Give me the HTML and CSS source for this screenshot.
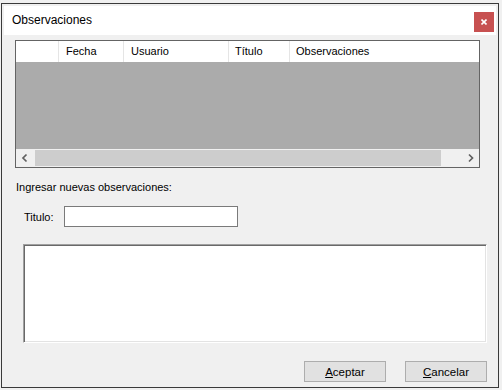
FILE: index.html
```html
<!DOCTYPE html>
<html>
<head>
    <meta charset="UTF-8">
    <meta name="viewport" content="width=device-width, initial-scale=1.0">
    <title>Observaciones</title>
    <link rel="stylesheet" href="styles.css">
</head>
<body>
    <div class="dialog">
        <div class="title-bar">
            <span class="title">Observaciones</span>
            <button class="close-btn" aria-label="Cerrar">
                <svg width="6" height="6" viewBox="0 0 6 6">
                    <path d="M0.5 0.5 L5.5 5.5 M5.5 0.5 L0.5 5.5" stroke="#fff" stroke-width="1.6" fill="none"/>
                </svg>
            </button>
        </div>

        <div class="dialog-body">
            <div class="grid">
                <div class="grid-header">
                    <div class="col col-row"></div>
                    <div class="col col-fecha">Fecha</div>
                    <div class="col col-usuario">Usuario</div>
                    <div class="col col-titulo">Título</div>
                    <div class="col col-obs">Observaciones</div>
                </div>
                <div class="grid-rows"></div>
                <div class="hscroll">
                    <div class="scroll-btn scroll-left">
                        <svg width="18" height="18" viewBox="0 0 18 18">
                            <polyline points="10.5,5.5 7,9 10.5,12.5" stroke="#606060" stroke-width="1.7" fill="none"/>
                        </svg>
                    </div>
                    <div class="scroll-track">
                        <div class="scroll-thumb"></div>
                    </div>
                    <div class="scroll-btn scroll-right">
                        <svg width="17" height="18" viewBox="0 0 17 18">
                            <polyline points="7,5.5 10.5,9 7,12.5" stroke="#606060" stroke-width="1.7" fill="none"/>
                        </svg>
                    </div>
                </div>
            </div>

            <p class="section-label">Ingresar nuevas observaciones:</p>

            <div class="field-row">
                <label for="titulo">Titulo:</label>
                <input type="text" id="titulo">
            </div>

            <textarea class="obs-text"></textarea>

            <div class="actions">
                <button class="btn"><u>A</u>ceptar</button>
                <button class="btn"><u>C</u>ancelar</button>
            </div>
        </div>
    </div>
</body>
</html>
```

FILE: styles.css
```css
:root {
    --face: #f0f0f0;
    --frame: #3a3a3a;
    --grid-border: #646464;
    --grid-empty: #ababab;
    --header-line: #e5e5e5;
    --close-red: #c75050;
}

* {
    box-sizing: border-box;
}

body {
    margin: 0;
    background-color: var(--face);
    font-family: "Liberation Sans", Arial, sans-serif;
    font-size: 11px;
    color: #000;
}

.dialog {
    width: 498px;
    height: 385px;
    margin: 3px 0 0 1px;
    padding: 2px 2px 0;
    border: 1px solid var(--frame);
    background-color: var(--face);
    display: flex;
    flex-direction: column;
}

.title-bar {
    height: 29px;
    background-color: #fff;
    display: flex;
    align-items: flex-start;
    justify-content: space-between;
}

.title {
    margin: 7px 0 0 8px;
    font-size: 12px;
    line-height: 15px;
}

.close-btn {
    width: 20px;
    height: 20px;
    margin: 6px 2px 0 0;
    padding: 0;
    border: none;
    background-color: var(--close-red);
    display: flex;
    align-items: center;
    justify-content: center;
}

.dialog-body {
    flex: 1;
    display: flex;
    flex-direction: column;
}

/* data grid */
.grid {
    width: 465px;
    height: 128px;
    margin: 5px 0 0 11px;
    border: 1px solid var(--grid-border);
    display: flex;
    flex-direction: column;
}

.grid-header {
    height: 21px;
    background-color: #fff;
    display: flex;
}

.col {
    line-height: 21px;
    padding-left: 7px;
    border-right: 1px solid var(--header-line);
    white-space: nowrap;
}

.col-row {
    width: 43px;
}

.col-fecha {
    width: 65px;
}

.col-usuario {
    width: 105px;
}

.col-titulo {
    width: 61px;
    padding-left: 6px;
}

.col-obs {
    flex: 1;
    padding-left: 6px;
    border-right: none;
}

.grid-rows {
    flex: 1;
    background-color: var(--grid-empty);
}

.hscroll {
    height: 18px;
    background-color: var(--face);
    display: flex;
}

.scroll-btn {
    display: flex;
}

.scroll-left {
    width: 18px;
}

.scroll-right {
    width: 17px;
}

.scroll-track {
    flex: 1;
    display: flex;
}

.scroll-thumb {
    width: 406px;
    margin: 1px 0 1px 1px;
    background-color: #cdcdcd;
}

/* new entry */
.section-label {
    margin: 12px 0 0 12px;
    line-height: 14px;
}

.field-row {
    margin: 12px 0 0 20px;
    display: flex;
    align-items: center;
}

.field-row label {
    width: 40px;
}

.field-row input {
    width: 174px;
    height: 21px;
    margin: 0;
    border: 1px solid #7a7a7a;
    background-color: #fff;
    font-family: inherit;
    font-size: 11px;
}

.obs-text {
    width: 464px;
    height: 99px;
    margin: 17px 0 0 19px;
    padding: 2px;
    border: 1px solid;
    border-color: #a0a0a0 #fff #fff #a0a0a0;
    box-shadow: inset 1px 1px 0 #696969, inset -1px -1px 0 #e3e3e3;
    background-color: #fff;
    font-family: inherit;
    font-size: 11px;
    resize: none;
    outline: none;
}

.actions {
    margin: 18px 9px 0 0;
    display: flex;
    justify-content: flex-end;
    gap: 19px;
}

.btn {
    width: 82px;
    height: 21px;
    padding: 0;
    border: 1px solid #adadad;
    background-color: #e1e1e1;
    font-family: inherit;
    font-size: 11.5px;
    color: #000;
}
```
